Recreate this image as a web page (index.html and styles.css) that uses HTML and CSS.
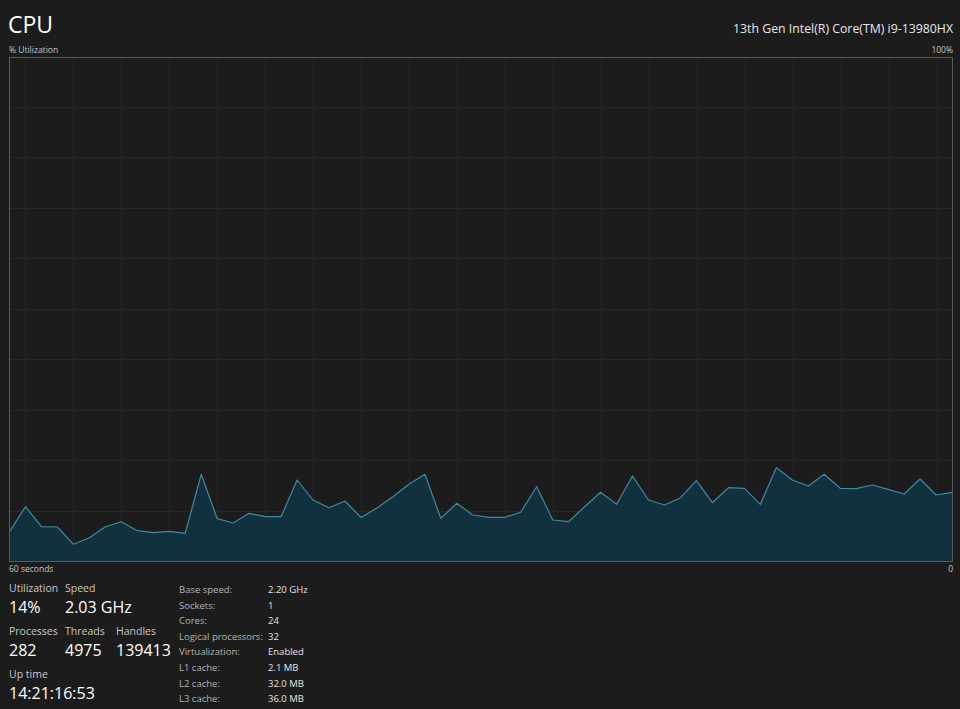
FILE: index.html
```html
<!DOCTYPE html>
<html lang="en">
<head>
    <meta charset="UTF-8">
    <meta name="viewport" content="width=device-width, initial-scale=1.0">
    <title>CPU</title>
    <link rel="stylesheet" href="styles.css">
</head>
<body>

<div class="panel">
    <div class="header">
        <h1 class="title">CPU</h1>
        <div class="cpu-name">13th Gen Intel(R) Core(TM) i9-13980HX</div>
    </div>

    <div class="axis-row axis-top">
        <span>% Utilization</span>
        <span>100%</span>
    </div>

    <!-- utilization graph, 60 samples -->
    <svg class="graph" width="944" height="505" viewBox="0 0 944 505">
        <g class="grid">
            <line x1="0" y1="50.5" x2="944" y2="50.5"/>
            <line x1="0" y1="100.5" x2="944" y2="100.5"/>
            <line x1="0" y1="151.5" x2="944" y2="151.5"/>
            <line x1="0" y1="201.5" x2="944" y2="201.5"/>
            <line x1="0" y1="252.5" x2="944" y2="252.5"/>
            <line x1="0" y1="302.5" x2="944" y2="302.5"/>
            <line x1="0" y1="353.5" x2="944" y2="353.5"/>
            <line x1="0" y1="403.5" x2="944" y2="403.5"/>
            <line x1="0" y1="454.5" x2="944" y2="454.5"/>
            <line x1="16.5" y1="0" x2="16.5" y2="505"/>
            <line x1="64.5" y1="0" x2="64.5" y2="505"/>
            <line x1="112.5" y1="0" x2="112.5" y2="505"/>
            <line x1="160.5" y1="0" x2="160.5" y2="505"/>
            <line x1="208.5" y1="0" x2="208.5" y2="505"/>
            <line x1="256.5" y1="0" x2="256.5" y2="505"/>
            <line x1="304.5" y1="0" x2="304.5" y2="505"/>
            <line x1="352.5" y1="0" x2="352.5" y2="505"/>
            <line x1="400.5" y1="0" x2="400.5" y2="505"/>
            <line x1="448.5" y1="0" x2="448.5" y2="505"/>
            <line x1="496.5" y1="0" x2="496.5" y2="505"/>
            <line x1="544.5" y1="0" x2="544.5" y2="505"/>
            <line x1="592.5" y1="0" x2="592.5" y2="505"/>
            <line x1="640.5" y1="0" x2="640.5" y2="505"/>
            <line x1="688.5" y1="0" x2="688.5" y2="505"/>
            <line x1="736.5" y1="0" x2="736.5" y2="505"/>
            <line x1="784.5" y1="0" x2="784.5" y2="505"/>
            <line x1="832.5" y1="0" x2="832.5" y2="505"/>
            <line x1="880.5" y1="0" x2="880.5" y2="505"/>
            <line x1="928.5" y1="0" x2="928.5" y2="505"/>
        </g>
        <polygon class="area" points="0.5,474.7 16.5,449.7 32.5,469.7 48.4,470 64.4,487.3 80.4,480.7 96.4,469.7 112.3,464.7 128.3,473.7 144.3,475.7 160.3,474.3 176.2,476.3 192.2,417.3 208.2,461.7 224.2,466 240.1,456.3 256.1,459.7 272.1,459.7 288.1,423 304,443 320,450.7 336,444 352,460.5 367.9,451 383.9,439.7 399.9,427.3 415.9,417.3 431.8,461.3 447.8,446.3 463.8,458 479.8,460.3 495.7,460.3 511.7,455.3 527.7,429.7 543.7,463 559.6,464.7 575.6,449.7 591.6,435.3 607.6,447.3 623.5,419 639.5,443 655.5,448 671.5,440.7 687.4,423.7 703.4,445.7 719.4,430.7 735.4,431.3 751.3,447.3 767.3,410.7 783.3,423 799.3,429 815.2,417.3 831.2,431.3 847.2,431.7 863.2,428 879.1,432.3 895.1,437 911.1,422 927.1,438 943,435.3 943,504 0.5,504"/>
        <polyline class="line" points="0.5,474.7 16.5,449.7 32.5,469.7 48.4,470 64.4,487.3 80.4,480.7 96.4,469.7 112.3,464.7 128.3,473.7 144.3,475.7 160.3,474.3 176.2,476.3 192.2,417.3 208.2,461.7 224.2,466 240.1,456.3 256.1,459.7 272.1,459.7 288.1,423 304,443 320,450.7 336,444 352,460.5 367.9,451 383.9,439.7 399.9,427.3 415.9,417.3 431.8,461.3 447.8,446.3 463.8,458 479.8,460.3 495.7,460.3 511.7,455.3 527.7,429.7 543.7,463 559.6,464.7 575.6,449.7 591.6,435.3 607.6,447.3 623.5,419 639.5,443 655.5,448 671.5,440.7 687.4,423.7 703.4,445.7 719.4,430.7 735.4,431.3 751.3,447.3 767.3,410.7 783.3,423 799.3,429 815.2,417.3 831.2,431.3 847.2,431.7 863.2,428 879.1,432.3 895.1,437 911.1,422 927.1,438 943,435.3"/>
        <rect class="frame" x="0.5" y="0.5" width="943" height="504"/>
    </svg>

    <div class="axis-row axis-bottom">
        <span>60 seconds</span>
        <span>0</span>
    </div>

    <div class="stats">
        <div class="live">
            <div class="stat">
                <div class="stat-label">Utilization</div>
                <div class="stat-value">14%</div>
            </div>
            <div class="stat stat-wide">
                <div class="stat-label">Speed</div>
                <div class="stat-value">2.03 GHz</div>
            </div>
            <div class="stat">
                <div class="stat-label">Processes</div>
                <div class="stat-value">282</div>
            </div>
            <div class="stat">
                <div class="stat-label">Threads</div>
                <div class="stat-value">4975</div>
            </div>
            <div class="stat">
                <div class="stat-label">Handles</div>
                <div class="stat-value">139413</div>
            </div>
            <div class="stat stat-full">
                <div class="stat-label">Up time</div>
                <div class="stat-value">14:21:16:53</div>
            </div>
        </div>

        <div class="specs">
            <div class="spec-label">Base speed:</div><div class="spec-value">2.20 GHz</div>
            <div class="spec-label">Sockets:</div><div class="spec-value">1</div>
            <div class="spec-label">Cores:</div><div class="spec-value">24</div>
            <div class="spec-label">Logical processors:</div><div class="spec-value">32</div>
            <div class="spec-label">Virtualization:</div><div class="spec-value">Enabled</div>
            <div class="spec-label">L1 cache:</div><div class="spec-value">2.1 MB</div>
            <div class="spec-label">L2 cache:</div><div class="spec-value">32.0 MB</div>
            <div class="spec-label">L3 cache:</div><div class="spec-value">36.0 MB</div>
        </div>
    </div>
</div>

</body>
</html>
```

FILE: styles.css
```css
body {
    font-family: "Open Sans", "Noto Sans", sans-serif;
    background-color: #1c1c1c;
    margin: 0;
    color: #fff;
}

.panel {
    width: 944px;
    padding: 9px 7px 0 9px;
}

.header {
    display: flex;
    justify-content: space-between;
    align-items: baseline;
    height: 30px;
}

.title {
    margin: 0 0 0 -1px;
    font-size: 23px;
    font-weight: 400;
    line-height: 30px;
}

.cpu-name {
    font-size: 12.3px;
    color: #e8e8e8;
}

.axis-row {
    display: flex;
    justify-content: space-between;
    font-size: 8.5px;
    color: #c4c4c4;
}

.axis-top {
    height: 18px;
    align-items: flex-end;
    line-height: 14px;
}

.axis-bottom {
    height: 19px;
    line-height: 14px;
}

.graph {
    display: block;
}

.grid line {
    stroke: #272727;
    stroke-width: 1;
}

.area {
    fill: #11313f;
}

.line {
    fill: none;
    stroke: #3f8aa0;
    stroke-width: 1.2;
    stroke-linejoin: round;
}

.frame {
    fill: none;
    stroke: #5a5a5a;
    stroke-width: 1;
}

.stats {
    display: flex;
}

.live {
    width: 170px;
    display: grid;
    grid-template-columns: 56px 51px auto;
    grid-auto-rows: 43px;
}

.stat-wide {
    grid-column: span 2;
}

.stat-full {
    grid-column: span 3;
}

.stat-label {
    font-size: 10.5px;
    line-height: 15px;
    color: #c8c8c8;
}

.stat-value {
    font-size: 16px;
    line-height: 22px;
    white-space: nowrap;
}

.specs {
    display: grid;
    grid-template-columns: 89px auto;
    grid-auto-rows: 15.6px;
    font-size: 9.5px;
    line-height: 15.6px;
    padding-top: 1px;
}

.spec-label {
    color: #b4b4b4;
    white-space: nowrap;
}

.spec-value {
    color: #e4e4e4;
}
```
